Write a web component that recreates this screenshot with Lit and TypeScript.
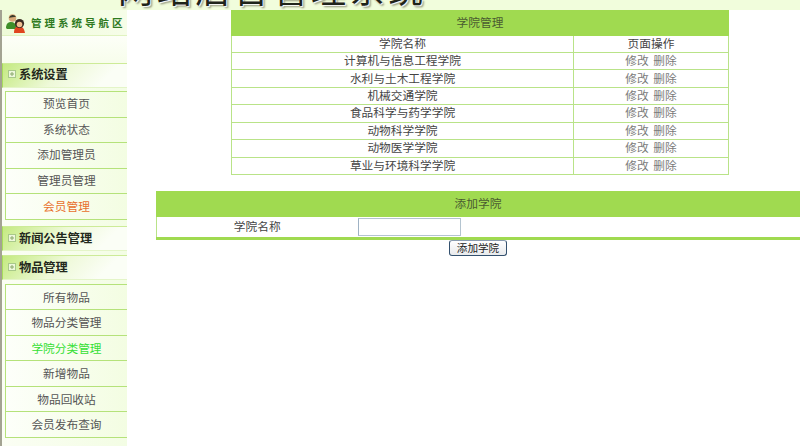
import { LitElement, html, css } from "lit";
import { customElement } from "lit/decorators.js";

const colleges = ["计算机与信息工程学院","水利与土木工程学院","机械交通学院","食品科学与药学学院","动物科学学院","动物医学学院","草业与环境科学学院"];

@customElement("app-root")
export class AppRoot extends LitElement {
  static styles = css`
    :host { display:block; width:800px; height:446px; overflow:hidden; background:#fff; font-family:"Noto Sans CJK SC","Liberation Sans",sans-serif; font-size:11.7px; color:#444; }
    * { box-sizing:border-box; }
    .header { height:10px; background:#f1fddc; overflow:hidden; display:flex; align-items:flex-end; padding-left:118px; }
    .title { flex:none; font-size:35px; line-height:46px; letter-spacing:3.6px; color:#1f241a; white-space:nowrap; text-shadow:1px 1px 1px #fff, 2px 2px 2px #8a8f70; margin-bottom:-1px; }
    .body { display:flex; height:436px; }
    .side { width:127px; flex:none; border-left:2px solid #a3a392; background:linear-gradient(90deg,#fbfef4,#f3fde4); display:flex; flex-direction:column; }
    .brand { height:26px; flex:none; display:flex; align-items:center; gap:5px; padding-left:4px; background:linear-gradient(90deg,#eefbd8,#f6fde8); border-bottom:1px solid #e0f3c0; }
    .brand span { font-size:10.5px; font-weight:700; letter-spacing:3px; color:#2f7a1f; white-space:nowrap; }
    .spacer { height:27px; flex:none; background:linear-gradient(180deg,#fdfff8,#f7fdeb); }
    .sec { height:25px; flex:none; display:flex; align-items:center; gap:3px; padding:0 0 3px 5px; font-size:12.2px; font-weight:700; color:#23281c; border-left:1px solid #a8dc5c; background:linear-gradient(135deg,#c4ea80 0%,#eef9d8 45%,#fbfef6 80%); border-top:1px solid #cdeb98; border-bottom:1px solid #e4f5c8; }
    .sec.low { padding-bottom:1px; }
    .sec svg { flex:none; }
    .gap-a { height:3px; flex:none; }
    .gap-b { height:6px; flex:none; }
    .gap-c { height:4px; flex:none; }
    .gap-d { height:4px; flex:none; }
    .menu { margin-left:3px; border-left:1px solid #b5e27a; border-top:1px solid #b5e27a; flex:none; }
    .item { height:25.6px; display:flex; align-items:center; justify-content:center; border-bottom:1px solid #b5e27a; color:#555; background:linear-gradient(90deg,#fdfffa,#f3fde2); padding-bottom:3px; }
    .menu.second .item { height:25.5px; padding-bottom:2px; }
    .item.orange { color:#e8702c; }
    .item.green { color:#35e035; }
    .main { flex:1; display:flex; flex-direction:column; align-items:flex-start; padding-left:29px; min-width:0; }
    table { border-collapse:collapse; table-layout:fixed; }
    td,th { font-weight:400; padding:0 0 2px; text-align:center; border:1px solid #b9e388; line-height:14px; }
    .t1 { width:498px; margin-left:75px; }
    .t1 .c1 { width:342px; }
    .t1 .head th { height:24.5px; background:#a0da50; border-color:#a0da50; color:#4a5a30; }
    .t1 td { height:17.45px; }
    .t1 td.op { color:#7a7a7a; word-spacing:2px; }
    .t2 { width:644px; margin-top:16px; border-bottom:3px solid #a0da50; }
    .t2 .c1 { width:201px; }
    .t2 th { height:25px; background:#a0da50; border-color:#a0da50; color:#4a5a30; }
    .t2 td { height:22px; border:0; border-left:1px solid #b9e388; }
    .t2 td + td { border-left:0; }
    .t2 .ctl { text-align:left; padding:0; }
    .ctl input { display:block; width:103px; height:18px; border:1px solid #b4c4d0; border-left-color:#9fb2c4; background:#fff; padding:0; outline:none; }
    .btn-row { width:644px; display:flex; justify-content:flex-start; padding-left:293px; }
    button { width:58px; height:16px; padding:0 0 2px; font:inherit; font-size:10.6px; line-height:13px; color:#222; border:1px solid #33506e; border-top-color:#8a9cb0; border-radius:3px; background:linear-gradient(180deg,#fff,#e8eaec); }
  `;
  plus() {
    return html`<svg width="8" height="8" viewBox="0 0 8 8"><rect x=".5" y=".5" width="7" height="7" fill="#eef8dc" stroke="#a9c98a"/><path d="M2 4h4M4 2v4" stroke="#8aa86c"/></svg>`;
  }
  logo() {
    return html`<svg width="20" height="20" viewBox="0 0 20 20" style="flex:none">
      <path d="M0 15c0-4 2-6 5-6s5 2 6 5v2H1z" fill="#3f8f2a"/>
      <circle cx="6.5" cy="5" r="3.8" fill="#d8a878"/>
      <path d="M3 5a3.8 3.8 0 0 1 7-1c-2 0-5 0-7 1z" fill="#3a3a2a"/>
      <path d="M8 20c0-5 2-7 5-7s5 2 6 7z" fill="#e0451f"/>
      <circle cx="13.5" cy="10.5" r="4.6" fill="#3a2a20"/>
      <circle cx="13.5" cy="11.5" r="2.8" fill="#f0c090"/>
    </svg>`;
  }
  render() {
    return html`
      <div class="header"><div class="title">网站后台管理系统</div></div>
      <div class="body">
        <nav class="side">
          <div class="brand">${this.logo()}<span>管理系统导航区</span></div>
          <div class="spacer"></div>
          <div class="sec">${this.plus()}系统设置</div>
          <div class="gap-a"></div>
          <div class="menu">
            <div class="item">预览首页</div><div class="item">系统状态</div><div class="item">添加管理员</div><div class="item">管理员管理</div><div class="item orange">会员管理</div>
          </div>
          <div class="gap-b"></div>
          <div class="sec low">${this.plus()}新闻公告管理</div>
          <div class="gap-c"></div>
          <div class="sec low">${this.plus()}物品管理</div>
          <div class="gap-d"></div>
          <div class="menu second">
            <div class="item">所有物品</div><div class="item">物品分类管理</div><div class="item green">学院分类管理</div><div class="item">新增物品</div><div class="item">物品回收站</div><div class="item">会员发布查询</div>
          </div>
        </nav>
        <main class="main">
          <table class="t1">
            <colgroup><col class="c1" /><col /></colgroup>
            <tr class="head"><th colspan="2">学院管理</th></tr>
            <tr><td>学院名称</td><td>页面操作</td></tr>
            ${colleges.map(c => html`<tr><td>${c}</td><td class="op">修改 删除</td></tr>`)}
          </table>
          <table class="t2">
            <colgroup><col class="c1" /><col /></colgroup>
            <tr><th colspan="2">添加学院</th></tr>
            <tr><td>学院名称</td><td class="ctl"><input type="text" /></td></tr>
          </table>
          <div class="btn-row"><button>添加学院</button></div>
        </main>
      </div>`;
  }
}
